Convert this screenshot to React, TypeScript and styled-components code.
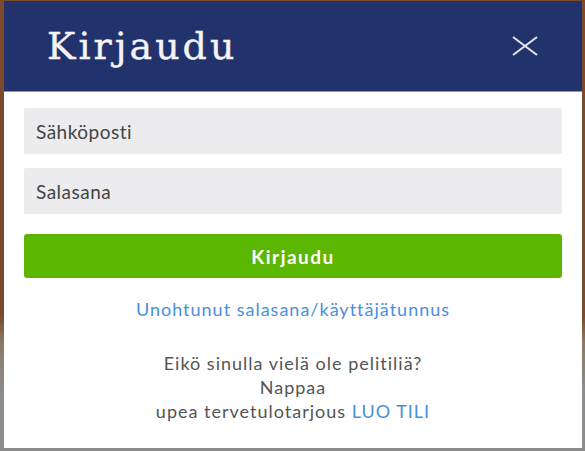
import React from "react";
import styled, { createGlobalStyle } from "styled-components";

const Global = createGlobalStyle`
  html, body { margin: 0; padding: 0; }
  body {
    width: 585px;
    height: 451px;
    overflow: hidden;
    background: linear-gradient(to bottom, #7a4a2a 0%, #7a4a2a 70%, #8a7a66 76%, #8c8c8c 86%, #8c8c8c 100%);
    font-family: "Lato", "Liberation Sans", sans-serif;
  }
`;

const Backdrop = styled.div`
  padding: 1px 3px 3px 4px;
  height: 451px;
  box-sizing: border-box;
`;

const Modal = styled.div`
  width: 578px;
  height: 447px;
  background: #ffffff;
  display: flex;
  flex-direction: column;
`;

const Header = styled.div`
  height: 91px;
  background: #22326d;
  display: flex;
  align-items: center;
  justify-content: space-between;
  padding: 0 44px 0 43px;
  border-bottom: 1px solid #8a94b8;
  box-sizing: border-box;
`;

const Title = styled.h1`
  margin: 0;
  font-family: "DejaVu Serif", "Liberation Serif", serif;
  font-weight: normal;
  font-size: 38px;
  color: #f4f4f4;
  letter-spacing: 3px;
  -webkit-text-stroke: 0.4px #f4f4f4;
`;

const CloseButton = styled.button`
  border: 0;
  background: transparent;
  padding: 0;
  width: 26px;
  height: 20px;
  display: flex;
  cursor: pointer;
`;

const Body = styled.div`
  display: flex;
  flex-direction: column;
  padding: 16px 20px 0 20px;
`;

const Field = styled.input<{ $gap: number }>`
  height: 46px;
  border: 0;
  border-radius: 2px;
  background: #ececee;
  padding: 0 12px;
  font-family: "Lato", sans-serif;
  font-size: 19px;
  letter-spacing: 0.5px;
  color: #444;
  outline: none;
  margin-bottom: ${(p) => p.$gap}px;
  &::placeholder { color: #444; }
`;

const Submit = styled.button`
  height: 44px;
  border: 0;
  border-radius: 3px;
  background: #5cb700;
  color: #fff;
  font-family: "Lato", sans-serif;
  font-weight: bold;
  font-size: 19px;
  letter-spacing: 1.5px;
  cursor: pointer;
`;

const Forgot = styled.a`
  align-self: center;
  margin-top: 20px;
  color: #4a8fdb;
  font-size: 18px;
  letter-spacing: 1px;
  text-decoration: none;
  line-height: 22px;
`;

const Promo = styled.p`
  margin: 31px 0 0 0;
  text-align: center;
  color: #555;
  font-size: 18px;
  letter-spacing: 1px;
  line-height: 24px;
`;

const Link = styled.a`
  color: #4a8fdb;
  text-decoration: none;
`;

export default function App() {
  return (
    <>
      <Global />
      <Backdrop>
        <Modal>
          <Header>
            <Title>Kirjaudu</Title>
            <CloseButton aria-label="close">
              <svg width="26" height="20" viewBox="0 0 26 20">
                <path d="M1 1 L25 19 M25 1 L1 19" stroke="#e6e6ee" strokeWidth="2" fill="none" />
              </svg>
            </CloseButton>
          </Header>
          <Body>
            <Field $gap={14} placeholder="Sähköposti" />
            <Field $gap={20} type="password" placeholder="Salasana" />
            <Submit>Kirjaudu</Submit>
            <Forgot href="#">Unohtunut salasana/käyttäjätunnus</Forgot>
            <Promo>
              Eikö sinulla vielä ole pelitiliä?
              <br />
              Nappaa
              <br />
              upea tervetulotarjous <Link href="#">LUO TILI</Link>
            </Promo>
          </Body>
        </Modal>
      </Backdrop>
    </>
  );
}
